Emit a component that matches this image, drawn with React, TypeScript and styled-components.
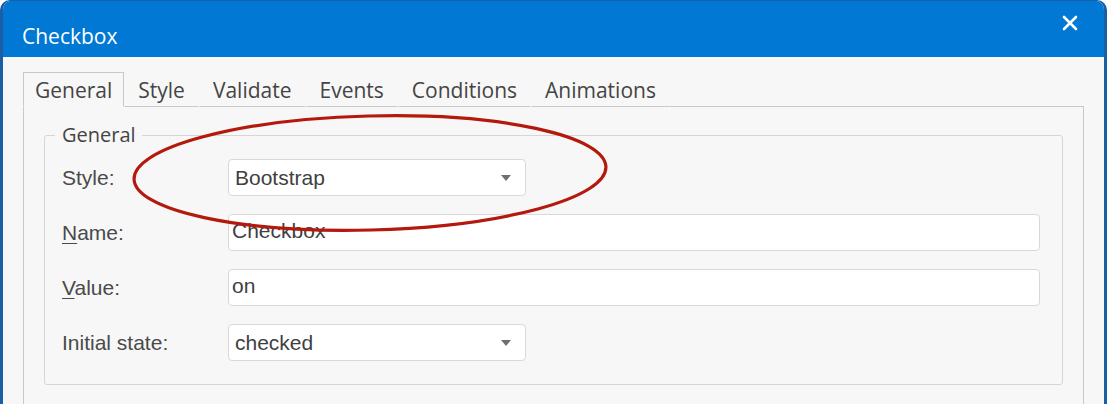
import styled, { createGlobalStyle } from 'styled-components';

const GlobalStyle = createGlobalStyle`
  html, body {
    margin: 0;
    padding: 0;
    background: #ffffff;
  }
`;

const Window = styled.div`
  position: relative;
  width: 1107px;
  height: 404px;
  box-sizing: border-box;
  border: 3px solid #1a5ea6;
  border-top-width: 1px;
  border-bottom: none;
  border-radius: 10px 10px 0 0;
  overflow: hidden;
  background: #f7f7f7;
  display: flex;
  flex-direction: column;
`;

const TitleBar = styled.div`
  display: flex;
  align-items: center;
  justify-content: space-between;
  height: 56px;
  flex-shrink: 0;
  background: #0078d4;
  padding: 0 22px 0 19px;
  color: #ffffff;
  font-family: 'Open Sans', 'Noto Sans', sans-serif;
  font-size: 21px;
`;

const Title = styled.span`
  margin-top: 13px;
`;

const CloseButton = styled.button`
  display: flex;
  align-items: center;
  justify-content: center;
  width: 24px;
  height: 24px;
  margin-top: -13px;
  padding: 0;
  border: none;
  background: transparent;
  cursor: pointer;
`;

const Body = styled.div`
  flex: 1;
  padding: 15px 20px 0 20px;
  display: flex;
  flex-direction: column;
`;

const TabStrip = styled.div`
  display: flex;
  align-items: stretch;
  height: 35px;
  font-family: 'Open Sans', 'Noto Sans', sans-serif;
  font-size: 21px;
  color: #444444;
`;

const Tab = styled.div<{ $active?: boolean }>`
  display: flex;
  align-items: center;
  padding: 0 ${(p) => (p.$active ? '11px' : '13px')};
  box-sizing: border-box;
  border: 1px solid ${(p) => (p.$active ? '#c9c9c9' : 'transparent')};
  border-bottom: 1px solid ${(p) => (p.$active ? '#f7f7f7' : '#c9c9c9')};
  background: #f7f7f7;
  cursor: default;
`;

const TabFiller = styled.div`
  flex: 1;
  border-bottom: 1px solid #c9c9c9;
`;

const Pane = styled.div`
  flex: 1;
  border: 1px solid #c9c9c9;
  border-top: none;
  border-bottom: none;
  padding: 17px 21px 0 20px;
`;

const Group = styled.fieldset`
  margin: 0;
  padding: 13px 22px 23px 17px;
  border: 1px solid #d6d6d6;
  border-radius: 3px;
`;

const Legend = styled.legend`
  margin-left: -7px;
  padding: 0 6px 0 7px;
  font-family: 'Open Sans', 'Noto Sans', sans-serif;
  font-size: 20px;
  line-height: 22px;
  color: #444444;
`;

const Form = styled.div`
  display: grid;
  grid-template-columns: 166px 1fr;
  row-gap: 18px;
  align-items: center;
`;

const Label = styled.label`
  font-family: 'Liberation Sans', Arial, sans-serif;
  font-size: 21px;
  color: #4a4a4a;

  u {
    text-decoration-thickness: 1px;
    text-underline-offset: 3px;
  }
`;

const Field = styled.div<{ $narrow?: boolean }>`
  display: flex;
  align-items: center;
  justify-content: space-between;
  box-sizing: border-box;
  width: ${(p) => (p.$narrow ? '298px' : '812px')};
  height: 37px;
  border: 1px solid #d9d9d9;
  border-radius: 4px;
  background: #ffffff;
  font-family: 'Liberation Sans', Arial, sans-serif;
  font-size: 21px;
  color: #3f3f3f;
`;

const SelectField = styled(Field)`
  padding: 0 14px 0 6px;
`;

const TextField = styled(Field)`
  padding: 0 3px 4px 3px;
`;

const Caret = styled.span`
  width: 0;
  height: 0;
  border-left: 5px solid transparent;
  border-right: 5px solid transparent;
  border-top: 6px solid #707070;
`;

const Highlight = styled.svg`
  position: absolute;
  left: 0;
  top: 0;
  pointer-events: none;
`;

const App = () => {
  return (
    <>
      <GlobalStyle />
      <Window>
        <TitleBar>
          <Title>Checkbox</Title>
          <CloseButton aria-label="Close">
            <svg width="16" height="16" viewBox="0 0 16 16">
              <path d="M2 2 L14 14 M14 2 L2 14" stroke="#ffffff" strokeWidth="2.6" strokeLinecap="round" />
            </svg>
          </CloseButton>
        </TitleBar>
        <Body>
          <TabStrip>
            <Tab $active>General</Tab>
            <Tab>Style</Tab>
            <Tab>Validate</Tab>
            <Tab>Events</Tab>
            <Tab>Conditions</Tab>
            <Tab>Animations</Tab>
            <TabFiller />
          </TabStrip>
          <Pane>
            <Group>
              <Legend>General</Legend>
              <Form>
                <Label>Style:</Label>
                <SelectField $narrow>
                  <span>Bootstrap</span>
                  <Caret />
                </SelectField>
                <Label>
                  <u>N</u>ame:
                </Label>
                <TextField>Checkbox</TextField>
                <Label>
                  <u>V</u>alue:
                </Label>
                <TextField>on</TextField>
                <Label>Initial state:</Label>
                <SelectField $narrow>
                  <span>checked</span>
                  <Caret />
                </SelectField>
              </Form>
            </Group>
          </Pane>
        </Body>
        <Highlight width="1107" height="404">
          <ellipse cx="367" cy="172" rx="236" ry="57" fill="none" stroke="#b3190c" strokeWidth="3.2" transform="rotate(-1.5 367 172)" />
        </Highlight>
      </Window>
    </>
  );
};

export default App;
